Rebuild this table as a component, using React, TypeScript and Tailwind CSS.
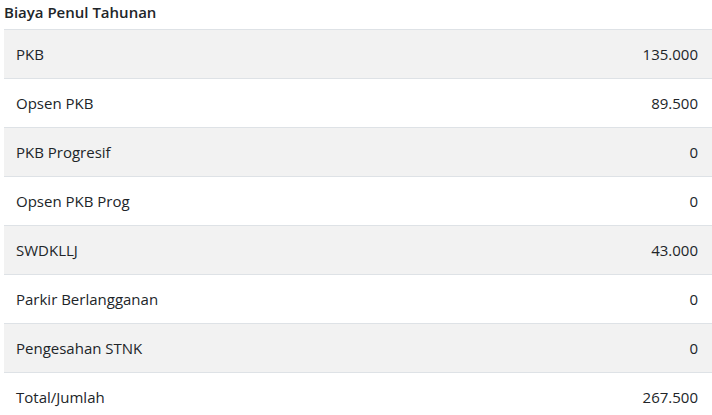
export default function App() {
  const rows: [string, string][] = [
    ["PKB", "135.000"],
    ["Opsen PKB", "89.500"],
    ["PKB Progresif", "0"],
    ["Opsen PKB Prog", "0"],
    ["SWDKLLJ", "43.000"],
    ["Parkir Berlangganan", "0"],
    ["Pengesahan STNK", "0"],
    ["Total/Jumlah", "267.500"],
  ];
  return (
    <div className="w-[712px] h-[415px] overflow-hidden bg-white pl-[4px] text-[#212529]" style={{ fontFamily: '"Segoe UI", "Open Sans", sans-serif' }}>
      <div className="h-[29px] text-[15px] font-semibold leading-[24px]">Biaya Penul Tahunan</div>
      <div className="border-t border-[#dee2e6]">
        {rows.map(([k, v], i) => (
          <div key={k} className={`flex justify-between border-b border-[#dee2e6] pl-3 pr-[14px] py-3 text-[15px] leading-[24px] ${i % 2 === 0 ? "bg-[#f2f2f2]" : "bg-white"}`}>
            <span>{k}</span>
            <span>{v}</span>
          </div>
        ))}
      </div>
    </div>
  );
}
